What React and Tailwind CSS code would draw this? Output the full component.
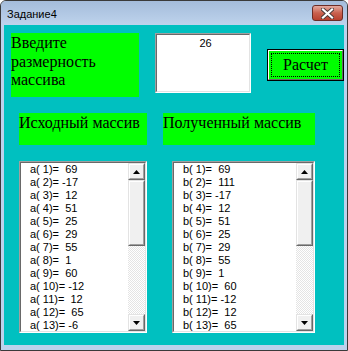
import React from "react";

const aVals = [69, -17, 12, 51, 25, 29, 55, 1, 60, -12, 12, 65, -6];
const bVals = [69, 111, -17, 12, 51, 25, 29, 55, 1, 60, -12, 12, 65];

// VB Str() keeps a leading space for non-negative numbers
const str = (n) => (n < 0 ? `${n}` : ` ${n}`);

function Raised({ className = "", children }) {
  return (
    <div
      className={`border border-t-[#e3e3e3] border-l-[#e3e3e3] border-b-[#696969] border-r-[#696969] ${className}`}
    >
      <div className="w-full h-full border border-t-white border-l-white border-b-[#a0a0a0] border-r-[#a0a0a0] bg-[#f0f0f0] flex items-center justify-center">
        {children}
      </div>
    </div>
  );
}

function Sunken({ className = "", children }) {
  return (
    <div
      className={`border border-t-[#a0a0a0] border-l-[#a0a0a0] border-b-white border-r-white ${className}`}
    >
      <div className="w-full h-full border border-t-[#696969] border-l-[#696969] border-b-[#e3e3e3] border-r-[#e3e3e3] bg-white flex overflow-hidden">
        {children}
      </div>
    </div>
  );
}

function Arrow({ down }) {
  return (
    <svg width="7" height="4" viewBox="0 0 7 4">
      <path d={down ? "M0 0h7L3.5 4z" : "M0 4h7L3.5 0z"} fill="#000" />
    </svg>
  );
}

function ListBox({ prefix, values, className }) {
  return (
    <Sunken className={className}>
      <div className="flex-1 pl-[9px] [font-family:Liberation_Sans,Arial,sans-serif] text-[11px] leading-[13px] text-black">
        {values.map((v, i) => (
          <div key={i} className="whitespace-pre h-[13px]">
            {`${prefix}( ${i + 1})= ${str(v)}`}
          </div>
        ))}
      </div>
      <div className="w-[17px] flex flex-col">
        <Raised className="h-[17px]">
          <Arrow />
        </Raised>
        <Raised className="h-[66px]" />
        <div className="flex-1 bg-[repeating-conic-gradient(#ffffff_0_25%,#e4e4e4_0_50%)] bg-[length:2px_2px]" />
        <Raised className="h-[17px]">
          <Arrow down />
        </Raised>
      </div>
    </Sunken>
  );
}

function Label({ className = "", children }) {
  return (
    <div
      className={`bg-[#00ff00] pt-[1px] [font-family:Liberation_Serif,serif] text-[16px] leading-[18.5px] text-black ${className}`}
    >
      {children}
    </div>
  );
}

export default function App() {
  return (
    <div className="w-[348px] h-[351px] flex flex-col overflow-hidden rounded-t-[6px] border border-[#3a3a3a] bg-[#bcd2ec] [font-family:Liberation_Sans,sans-serif]">
      {/* Title bar */}
      <div className="h-[24px] flex justify-between bg-gradient-to-b from-[#a4bcdb] to-[#bed3ec]">
        <p className="pl-[6px] pt-[7px] text-[11px] leading-[13px] text-black">
          Задание4
        </p>
        <div className="mt-[4px] mr-[4px] w-[31px] h-[16px] rounded-[3px] border border-[#6b2c26] bg-gradient-to-b from-[#e3aaa0] via-[#c9604e] to-[#b8402f] flex items-center justify-center">
          <svg width="13" height="11" viewBox="0 0 13 11">
            <path
              d="M2 1.5l9 8M11 1.5l-9 8"
              stroke="#4a3a3a"
              strokeWidth="4"
              strokeLinecap="square"
            />
            <path
              d="M2 1.5l9 8M11 1.5l-9 8"
              stroke="#ffffff"
              strokeWidth="2.2"
              strokeLinecap="square"
            />
          </svg>
        </div>
      </div>

      {/* Client area */}
      <div className="flex-1 ml-[3px] mr-[3px] mb-[5px] bg-[#00c0c0] overflow-hidden">
        <div className="flex items-start pl-[7px] pt-[8px]">
          <Label className="w-[128px] h-[64px]">
            Введите
            <br />
            размерность
            <br />
            массива
          </Label>
          <Sunken className="ml-[16px] w-[96px] h-[60px]">
            <p className="flex-1 pl-[5px] pt-[2px] text-center text-[11px] leading-[13px] text-black">
              26
            </p>
          </Sunken>
          <div className="ml-[16px] mt-[16px] w-[77px] h-[32px] border border-black">
            <div className="w-full h-full border border-t-white border-l-white border-b-[#696969] border-r-[#696969] bg-[#00ff00] p-[2px]">
              <div className="w-full h-full border border-dotted border-black flex items-center justify-center [font-family:Liberation_Serif,serif] text-[16px] leading-[18px] text-black">
                Расчет
              </div>
            </div>
          </div>
        </div>

        <div className="flex pl-[15px] mt-[16px]">
          <Label className="w-[128px] h-[32px]">Исходный массив</Label>
          <Label className="ml-[16px] w-[152px] h-[32px]">Полученный массив</Label>
        </div>

        <div className="flex pl-[15px] mt-[16px]">
          <ListBox prefix="a" values={aVals} className="w-[128px] h-[172px]" />
          <ListBox prefix="b" values={bVals} className="ml-[25px] w-[143px] h-[172px]" />
        </div>
      </div>
    </div>
  );
}
